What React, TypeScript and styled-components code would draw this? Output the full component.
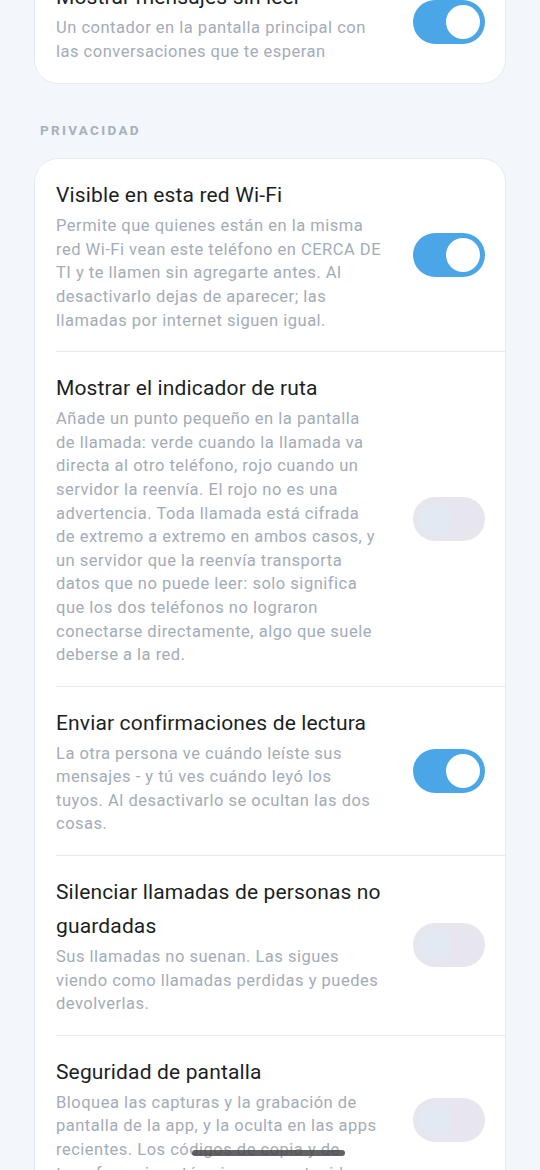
import React from "react";
import styled, { createGlobalStyle } from "styled-components";

const Global = createGlobalStyle`
  html, body { margin: 0; padding: 0; background: #f3f6fa; }
  body { font-family: Roboto, "Noto Sans", sans-serif; -webkit-font-smoothing: antialiased; }
  * { box-sizing: border-box; }
`;

const Viewport = styled.div`
  height: 1170px;
  overflow: hidden;
  position: relative;
  background: #f3f6fa;
`;

const Page = styled.div`
  margin-top: -40px;
  padding: 0 34px;
  display: flex;
  flex-direction: column;
`;

const SectionLabel = styled.div`
  padding: 38px 6px 0;
  margin-bottom: 20px;
  font-size: 13.5px;
  line-height: 16px;
  font-weight: 700;
  letter-spacing: 2.3px;
  color: #a6b0bc;
  text-transform: uppercase;
`;

const Card = styled.div`
  background: #ffffff;
  border: 1px solid #e6ebf1;
  border-radius: 24px;
  overflow: hidden;
  display: flex;
  flex-direction: column;
`;

const Row = styled.div<{ $last?: boolean }>`
  display: flex;
  align-items: center;
  gap: 31px;
  padding: 19px 20px 20px 21px;
  position: relative;
  &::after {
    content: "";
    display: ${(p) => (p.$last ? "none" : "block")};
    position: absolute;
    left: 21px;
    right: 0;
    bottom: 0;
    height: 1px;
    background: #e6eaef;
  }
`;

const Text = styled.div`
  flex: 1;
  min-width: 0;
  display: flex;
  flex-direction: column;
  gap: 2px;
`;

const Title = styled.div`
  font-size: 21px;
  line-height: 34px;
  color: #1b1f24;
  letter-spacing: 0.15px;
  margin-right: -6px;
`;

const Desc = styled.div`
  font-size: 16.5px;
  line-height: 23.6px;
  color: #a3acb7;
  letter-spacing: 0.5px;
`;

const Track = styled.div<{ $on: boolean }>`
  flex: none;
  width: 72px;
  height: 44px;
  border-radius: 22px;
  background: ${(p) => (p.$on ? "#4ba6e7" : "#e7e5ee")};
  position: relative;
`;

const Knob = styled.div<{ $on: boolean }>`
  position: absolute;
  top: 5px;
  left: ${(p) => (p.$on ? "33px" : "5px")};
  width: 34px;
  height: 34px;
  border-radius: 50%;
  background: ${(p) => (p.$on ? "#ffffff" : "#e3e9f2")};
`;

const NavHandle = styled.div`
  position: fixed;
  left: 192px;
  bottom: 14px;
  width: 153px;
  height: 6px;
  border-radius: 3px;
  background: rgba(70, 72, 74, 0.85);
`;

type Item = { title: string; desc: string; on: boolean };

const Toggle = ({ on }: { on: boolean }) => (
  <Track $on={on}>
    <Knob $on={on} />
  </Track>
);

const Setting = ({ item, last }: { item: Item; last?: boolean }) => (
  <Row $last={last}>
    <Text>
      <Title>{item.title}</Title>
      <Desc>{item.desc}</Desc>
    </Text>
    <Toggle on={item.on} />
  </Row>
);

const top: Item[] = [
  {
    title: "Mostrar mensajes sin leer",
    desc: "Un contador en la pantalla principal con las conversaciones que te esperan",
    on: true,
  },
];

const privacy: Item[] = [
  {
    title: "Visible en esta red Wi-Fi",
    desc: "Permite que quienes están en la misma red Wi-Fi vean este teléfono en CERCA DE TI y te llamen sin agregarte antes. Al desactivarlo dejas de aparecer; las llamadas por internet siguen igual.",
    on: true,
  },
  {
    title: "Mostrar el indicador de ruta",
    desc: "Añade un punto pequeño en la pantalla de llamada: verde cuando la llamada va directa al otro teléfono, rojo cuando un servidor la reenvía. El rojo no es una advertencia. Toda llamada está cifrada de extremo a extremo en ambos casos, y un servidor que la reenvía transporta datos que no puede leer: solo significa que los dos teléfonos no lograron conectarse directamente, algo que suele deberse a la red.",
    on: false,
  },
  {
    title: "Enviar confirmaciones de lectura",
    desc: "La otra persona ve cuándo leíste sus mensajes - y tú ves cuándo leyó los tuyos. Al desactivarlo se ocultan las dos cosas.",
    on: true,
  },
  {
    title: "Silenciar llamadas de personas no guardadas",
    desc: "Sus llamadas no suenan. Las sigues viendo como llamadas perdidas y puedes devolverlas.",
    on: false,
  },
  {
    title: "Seguridad de pantalla",
    desc: "Bloquea las capturas y la grabación de pantalla de la app, y la oculta en las apps recientes. Los códigos de copia y de transferencia están siempre protegidos.",
    on: false,
  },
];

export default function App() {
  return (
    <Viewport>
      <Global />
      <Page>
        <Card>
          {top.map((it, i) => (
            <Setting key={i} item={it} last={i === top.length - 1} />
          ))}
        </Card>
        <SectionLabel>Privacidad</SectionLabel>
        <Card>
          {privacy.map((it, i) => (
            <Setting key={i} item={it} last={i === privacy.length - 1} />
          ))}
        </Card>
      </Page>
      <NavHandle />
    </Viewport>
  );
}
